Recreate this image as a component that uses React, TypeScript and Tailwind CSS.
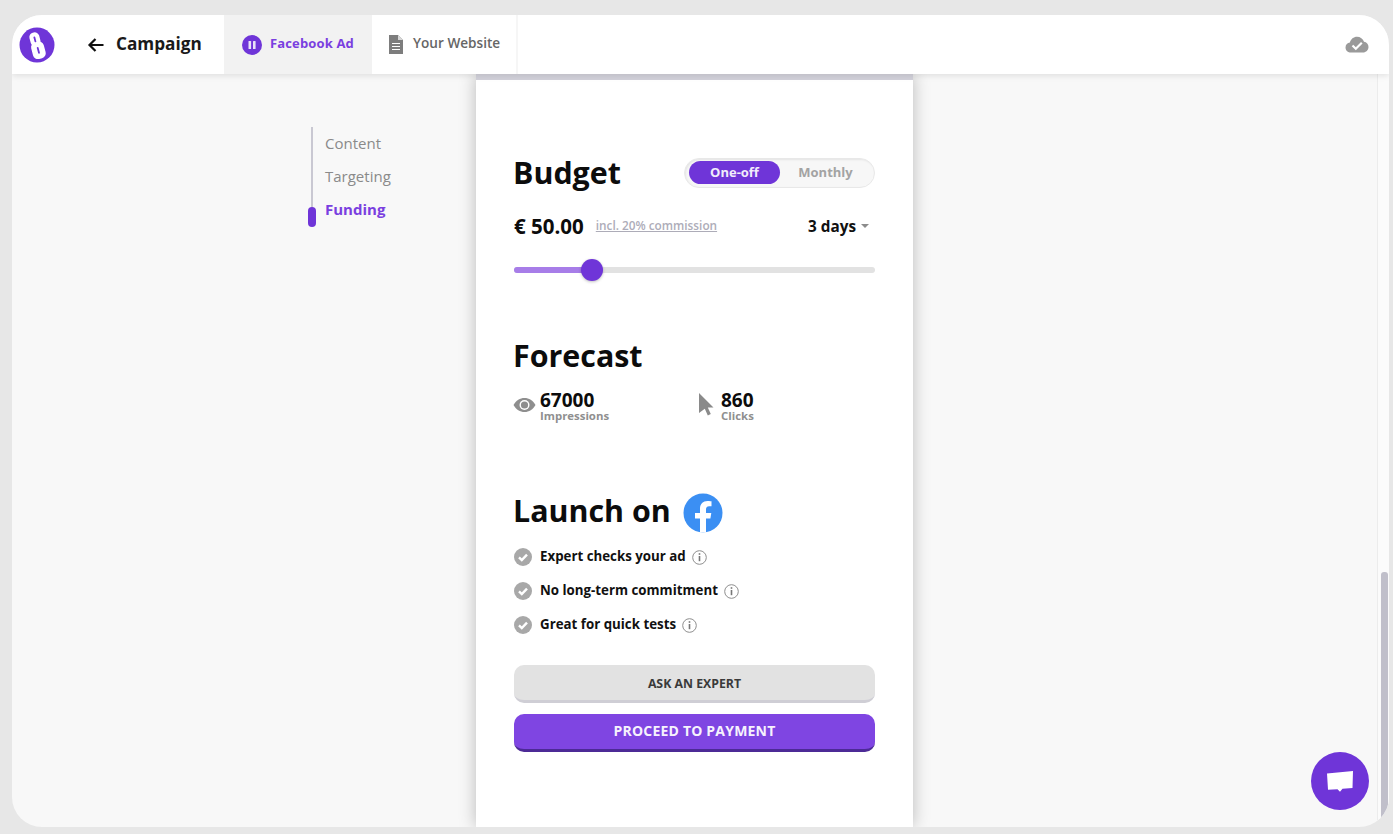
import React from "react";

const Check = () => (
  <svg width="18" height="18" viewBox="0 0 18 18" className="shrink-0">
    <circle cx="9" cy="9" r="9" fill="#a8a8a8" />
    <path d="M5 9.300l2.800 2.800L13 6.600" fill="none" stroke="#fff" strokeWidth="2.400" />
  </svg>
);

const Info = () => (
  <svg width="15" height="15" viewBox="0 0 15 15" className="shrink-0">
    <circle cx="7.500" cy="7.500" r="6.800" fill="none" stroke="#8d8d8d" strokeWidth="1" />
    <rect x="6.700" y="3.200" width="1.600" height="1.600" fill="#777" />
    <rect x="6.700" y="6" width="1.600" height="5.200" fill="#777" />
  </svg>
);

const Feature = ({ text }: { text: string }) => (
  <div className="flex h-[18px] items-center">
    <Check />
    <span className="ml-2 text-[13.300px] font-bold text-[#111]">{text}</span>
    <span className="ml-[6px]"><Info /></span>
  </div>
);

export default function App() {
  return (
    <div className="h-[834px] w-[1393px] overflow-hidden bg-[#e7e7e7] pt-[15px] pl-[12px] pr-[4px] pb-[7px] font-['Open_Sans',sans-serif]">
      <div className="relative flex h-full flex-col overflow-hidden rounded-[30px] bg-[#f8f8f8]">
        <header className="z-10 flex h-[59px] shrink-0 items-stretch bg-white shadow-[0_2px_6px_rgba(0,0,0,0.10)]">
          <div className="flex w-[212px] items-center pl-[7px]">
            <svg width="36" height="36" viewBox="0 0 36 36" className="shrink-0">
              <circle cx="18" cy="18" r="17.500" fill="#6f35d8" />
              <g transform="rotate(-15 18 18)">
                <rect x="12.500" y="5" width="10" height="14" rx="4.500" fill="#fff" />
                <rect x="11.500" y="15" width="13" height="17" rx="5" fill="#fff" />
                <rect x="16.500" y="9" width="1.800" height="6" rx="0.900" fill="#6f35d8" />
                <rect x="17" y="20" width="1.800" height="7" rx="0.900" fill="#6f35d8" />
              </g>
            </svg>
            <svg width="18" height="16" viewBox="0 0 18 16" className="ml-[32px] shrink-0">
              <path d="M16.500 8H2.500M8.500 2l-6 6 6 6" fill="none" stroke="#111" strokeWidth="2.200" />
            </svg>
            <span className="ml-[11px] pb-[2px] text-[17.200px] font-bold text-[#1a1a1a]">Campaign</span>
          </div>
          <div className="flex w-[148px] items-center bg-[#f2f2f2] pl-[18px]">
            <svg width="20" height="20" viewBox="0 0 20 20" className="shrink-0">
              <circle cx="10" cy="10" r="10" fill="#6f35d8" />
              <rect x="6.500" y="6" width="2.600" height="8" rx="0.600" fill="#e9e2f8" />
              <rect x="11" y="6" width="2.600" height="8" rx="0.600" fill="#e9e2f8" />
            </svg>
            <span className="ml-[8px] pb-[2px] text-[13px] font-bold text-[#7a3fe0] tracking-[0.15px]">Facebook Ad</span>
          </div>
          <div className="flex w-[146px] items-center border-r-2 border-[#f6f6f6] pl-[17px]">
            <svg width="14" height="19" viewBox="0 0 14 19" className="shrink-0">
              <path d="M0 0h9l5 5v14H0z" fill="#7d7d7d" />
              <path d="M9 0v5h5" fill="#d8d8d8" />
              <path d="M3 8.500h8M3 11.500h8M3 14.500h8" stroke="#fff" strokeWidth="1" />
            </svg>
            <span className="ml-[10px] pb-[2px] text-[13.600px] font-semibold text-[#666]">Your Website</span>
          </div>
          <div className="flex flex-1 items-center justify-end pr-[20px]">
            <svg width="24" height="18" viewBox="0 0 24 18">
              <path d="M6 16.500c-3 0-5.500-2-5.500-5 0-2.600 2-4.600 4.400-4.900C5.800 3 8.600.8 12 .8c3.300 0 6 2 7 5 2.600.3 4.500 2.500 4.500 5.200 0 3-2.500 5.500-5.500 5.500z" fill="#9a9a9a" />
              <path d="M7.500 9.500l3.300 3.300 6-6" fill="none" stroke="#fff" strokeWidth="2.200" />
            </svg>
          </div>
        </header>

        <main className="flex min-h-0 flex-1">
          <nav className="w-[464px] shrink-0 pt-[53px] pl-[299px]">
            <div className="relative w-[120px] border-l-2 border-[#c9c8d2] pl-[12px]">
              <div className="flex h-[33px] items-center text-[15px] text-[#8a8a8a]">Content</div>
              <div className="flex h-[33px] items-center text-[15px] text-[#8a8a8a]">Targeting</div>
              <div className="flex h-[33px] items-center text-[15px] font-bold text-[#7a3fe0]">Funding</div>
              <div className="absolute left-[-5px] bottom-[-1px] h-[20px] w-[8px] rounded-[4px] bg-[#6f35d8]" />
            </div>
          </nav>

          <section className="w-[437px] shrink-0 bg-white shadow-[0_0_16px_rgba(0,0,0,0.25)]">
            <div className="h-[6px] bg-[#d2d1da]" />
            <div className="px-[38px] pt-[71px]">
              <div className="flex h-[45px] items-center justify-between">
                <h2 className="-ml-px text-[30.400px] font-bold leading-none text-[#0c0c0c]">Budget</h2>
                <div className="mb-[2px] flex h-[30px] w-[191px] items-center rounded-full border border-[#e8e8e8] bg-[#f7f7f7] pl-[4px] shadow-[inset_1px_1px_2px_rgba(0,0,0,0.08)]">
                  <div className="flex h-[23px] w-[91px] items-center justify-center rounded-full bg-[#6f35d8] text-[13px] font-bold text-[#f1ecfb]">One-off</div>
                  <div className="flex h-[23px] w-[91px] items-center justify-center text-[13px] font-bold text-[#a3a3a3]">Monthly</div>
                </div>
              </div>
              <div className="mt-[17px] flex h-[26px] items-center">
                <span className="text-[20.500px] font-bold text-[#0c0c0c]">€ 50.00</span>
                <span className="ml-[12px] text-[11.800px] font-semibold text-[#adacb8] underline">incl. 20% commission</span>
                <span className="ml-auto text-[15.300px] font-bold text-[#111]">3 days</span>
                <span className="ml-[5px] mr-[6px] h-0 w-0 border-x-[4px] border-t-[4px] border-x-transparent border-t-[#8c8c8c]" />
              </div>
              <div className="relative mt-[28px] h-[6px] rounded-full bg-[#e2e2e2]">
                <div className="h-full w-[78px] rounded-full bg-[#a77de8]" />
                <div className="absolute left-[67px] top-[-8px] h-[22px] w-[22px] rounded-full bg-[#6f35d8] shadow-[0_1px_3px_rgba(0,0,0,0.25)]" />
              </div>

              <h2 className="-ml-px mt-[63px] text-[30.400px] font-bold leading-[40px] text-[#0c0c0c]">Forecast</h2>
              <div className="mt-[13px] flex h-[36px]">
                <div className="flex w-[184px]">
                  <svg width="23" height="16" viewBox="0 0 23 16" className="-ml-px mt-[8px] shrink-0">
                    <path d="M.5 8C3 3.500 7 1 11.500 1S20 3.500 22.500 8C20 12.500 16 15 11.500 15S3 12.500.5 8z" fill="#8e8e8e" />
                    <circle cx="11.500" cy="8" r="5" fill="#fff" />
                    <circle cx="11.500" cy="8" r="3.600" fill="#8e8e8e" />
                  </svg>
                  <div className="ml-[4px]">
                    <div className="text-[19px] font-bold leading-[22px] text-[#0c0c0c]">67000</div>
                    <div className="-mt-px text-[11.400px] font-bold leading-[12px] text-[#8f8f8f]">Impressions</div>
                  </div>
                </div>
                <div className="flex">
                  <svg width="16" height="24" viewBox="0 0 16 24" className="mt-[4px] shrink-0">
                    <path d="M1 0l14.500 14.500H9.800l3 6.500-3 1.500-3-6.700L1 20z" fill="#8a8a8a" />
                  </svg>
                  <div className="ml-[7px]">
                    <div className="text-[19px] font-bold leading-[22px] text-[#0c0c0c]">860</div>
                    <div className="-mt-px text-[11.400px] font-bold leading-[12px] text-[#8f8f8f]">Clicks</div>
                  </div>
                </div>
              </div>

              <div className="mt-[66px] flex h-[40px] items-center">
                <h2 className="-ml-px text-[30.400px] font-bold leading-none text-[#0c0c0c]">Launch on</h2>
                <svg width="40" height="40" viewBox="0 0 40 40" className="ml-[12px] mt-[3px] shrink-0">
                  <circle cx="20" cy="20" r="19.500" fill="#3b8ff3" />
                  <path d="M17 39.500V25.500h-5V20h5v-4.200c0-5 3-7.800 7.500-7.800 2.200 0 4 .3 4 .3v4.900h-2.300c-2.500 0-3.200 1.500-3.200 3.100V20h5.300l-.9 5.500h-4.400v14z" fill="#fff" />
                </svg>
              </div>
              <div className="mt-[17px] flex flex-col gap-[16px]">
                <Feature text="Expert checks your ad" />
                <Feature text="No long-term commitment" />
                <Feature text="Great for quick tests" />
              </div>
              <button className="mt-[31px] block h-[38px] w-full rounded-[10px] border-b-[3px] border-[#cfced5] bg-[#e2e2e2] pt-[3px] text-[12.300px] font-bold text-[#3a3a3a]">ASK AN EXPERT</button>
              <button className="mt-[11px] block h-[38px] w-full rounded-[10px] border-b-[3px] border-[#4c2a96] bg-[#7f45e2] pb-[2px] text-[14px] font-bold tracking-[0.2px] text-[#f6f2fd]">PROCEED TO PAYMENT</button>
            </div>
          </section>

          <div className="flex-1" />
          <div className="flex w-[12px] shrink-0 flex-col justify-end border-l border-[#ececec] bg-[#fbfbfb] pl-[3px]">
            <div className="h-[255px] w-[7px] rounded-t-[3px] bg-[#c0bfca]" />
          </div>
        </main>

        <button className="absolute bottom-[17px] right-[20px] flex h-[58px] w-[58px] items-center justify-center rounded-full bg-[#6f35d8]">
          <svg width="28" height="24" viewBox="0 0 28 24">
            <path d="M1 4.500L27 2l-.5 17-10 .8-2.500 3-2.500-2.500-9.500.5z" fill="#fff" />
          </svg>
        </button>
      </div>
    </div>
  );
}
